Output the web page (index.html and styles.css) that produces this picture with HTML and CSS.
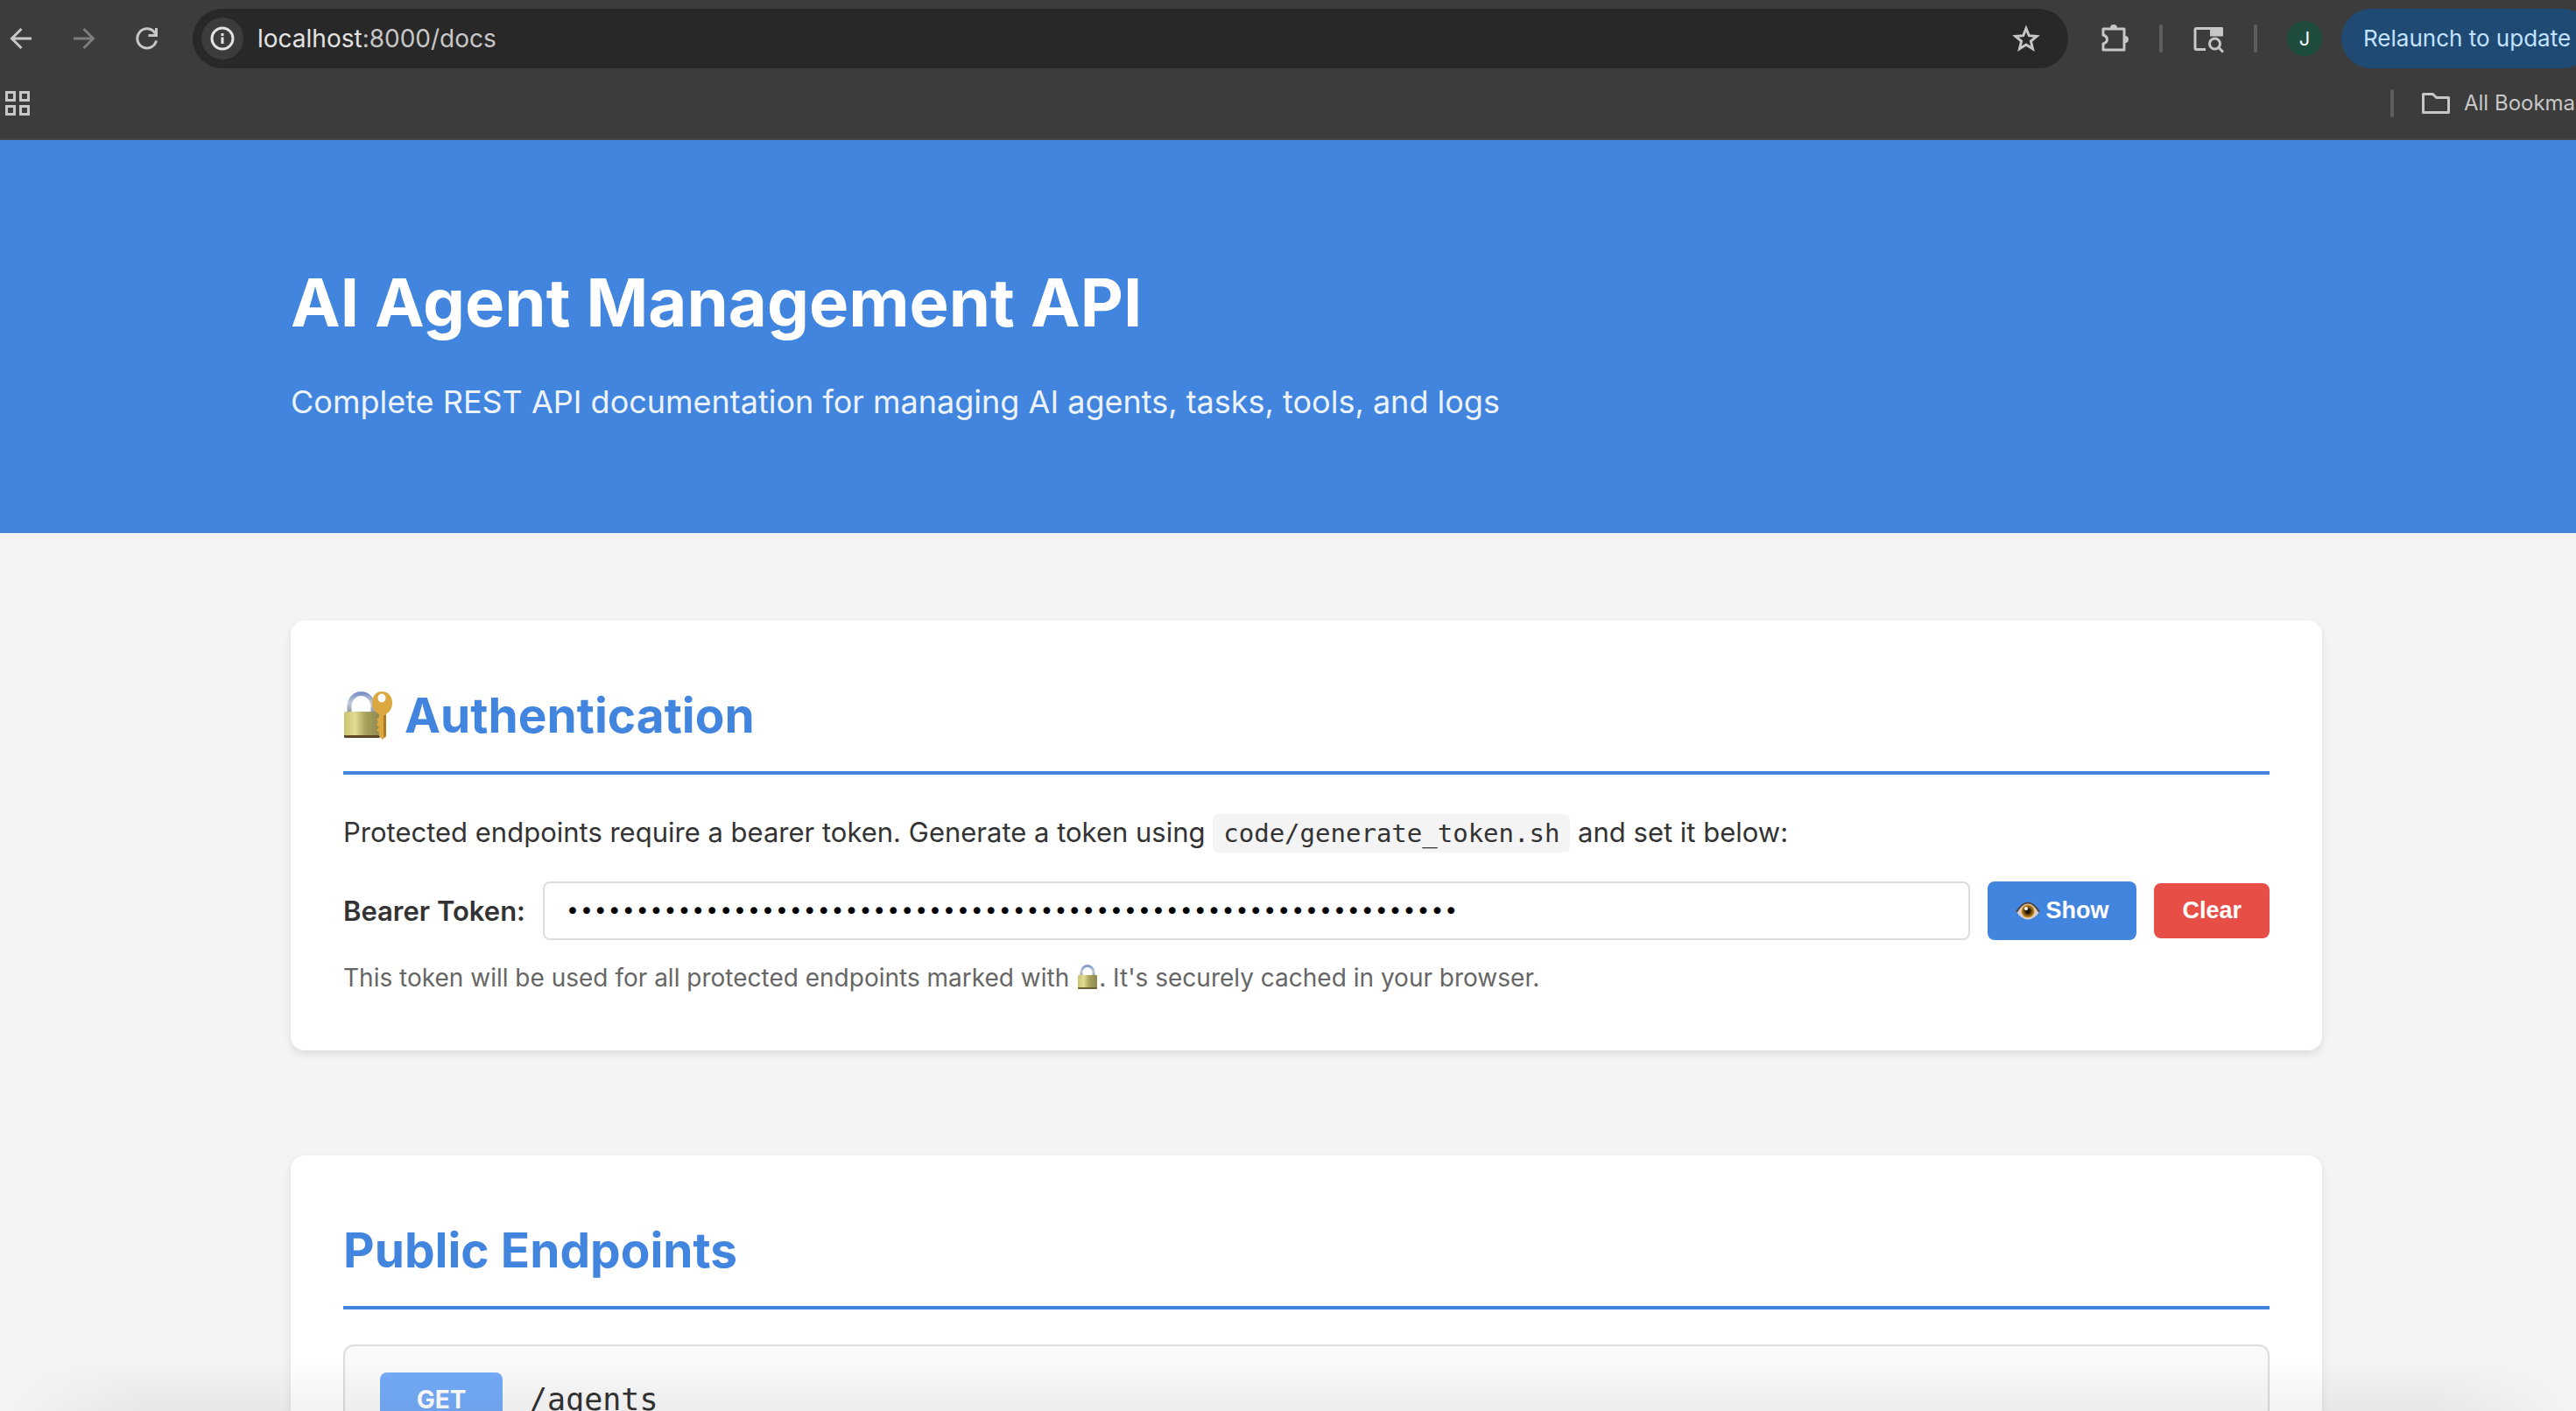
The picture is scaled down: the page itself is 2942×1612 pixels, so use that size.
FILE: index.html
```html
<!DOCTYPE html>
<html lang="en">
<head>
<meta charset="utf-8">
<title>AI Agent Management API</title>
<link rel="stylesheet" href="styles.css">
</head>
<body>
<div class="window">
  <nav class="chrome" aria-label="Browser">
    <div class="toolbar">
      <div class="nav-buttons">
        <button class="icon-button" aria-label="Back"><svg width="26" height="26" viewBox="0 0 26 26" fill="none" stroke="#c7c7c7" stroke-width="3"><path d="M25 13H3M13.500 2 2.500 13l11 11"/></svg></button>
        <button class="icon-button" aria-label="Forward"><svg width="26" height="26" viewBox="0 0 26 26" fill="none" stroke="#7d7d7d" stroke-width="3"><path d="M1 13h22M12.500 2l11 11-11 11"/></svg></button>
        <button class="icon-button" aria-label="Reload"><svg width="26" height="26" viewBox="0 0 26 26" fill="none" stroke="#c7c7c7" stroke-width="3"><path d="M23.500 15.500A11 11 0 1 1 21 5.500L24 9M23.500 1v8.500h-9"/></svg></button>
      </div>
      <div class="omnibox">
        <button class="site-info" aria-label="Site information"><svg width="28" height="28" viewBox="0 0 28 28" fill="none" stroke="#e3e3e3" stroke-width="3"><circle cx="14" cy="14" r="12"/><path d="M14 12.500v7.500M14 8v3"/></svg></button>
        <span class="url"><span class="url-host">localhost</span>:8000/docs</span>
        <button class="icon-button" aria-label="Bookmark this tab"><svg width="32" height="32" viewBox="0 0 32 32" fill="none" stroke="#c7c7c7" stroke-width="3"><path d="M16 4.500l3.300 8.200 8.800.7-6.700 5.700 2.100 8.600L16 23l-7.500 4.700 2.100-8.600-6.700-5.700 8.800-.7z"/></svg></button>
      </div>
      <div class="actions">
        <button class="icon-button" aria-label="Extensions"><svg width="36" height="36" viewBox="0 0 36 36"><path d="M6 7h24v24H6v-7c3-1 4.500-2.500 4.500-5S9 15 6 14z" fill="none" stroke="#c7c7c7" stroke-width="3" stroke-linejoin="round"/><path d="M14 6a4 4 0 0 1 8 0zM31 15a4 4 0 0 1 0 8z" fill="#c7c7c7"/></svg></button>
        <span class="divider"></span>
        <button class="icon-button" aria-label="Search side panel"><svg width="36" height="36" viewBox="0 0 36 36"><path d="M15 30.500H4.500q-1.500 0-1.500-1.500V8q0-1.500 1.500-1.500H33V14H20" fill="none" stroke="#c7c7c7" stroke-width="3"/><path d="M20 5h12q3 0 3 3v7H20z" fill="#c7c7c7"/><circle cx="25.500" cy="24" r="6" fill="none" stroke="#c7c7c7" stroke-width="3"/><path d="M29.500 28l5.500 5.500" stroke="#c7c7c7" stroke-width="3"/></svg></button>
        <span class="divider"></span>
        <button class="avatar" aria-label="Profile">J</button>
        <button class="relaunch">Relaunch to update</button>
      </div>
    </div>
    <div class="bookmarks">
      <button class="icon-button" aria-label="Apps"><svg width="28" height="28" viewBox="0 0 28 28" fill="none" stroke="#c7c7c7" stroke-width="3"><path d="M1.500 1.500h9v9h-9zM17.500 1.500h9v9h-9zM1.500 17.500h9v9h-9zM17.500 17.500h9v9h-9z"/></svg></button>
      <div class="all-bookmarks">
        <span class="divider"></span>
        <button class="folder"><svg width="32" height="24" viewBox="0 0 32 24" fill="none" stroke="#c7c7c7" stroke-width="3" stroke-linejoin="round"><path d="M1.500 1.500h11l4 4h14v17h-29z"/></svg>All Bookmarks</button>
      </div>
    </div>
  </nav>

  <header class="hero">
    <div class="container">
      <h1>AI Agent Management API</h1>
      <p>Complete REST API documentation for managing AI agents, tasks, tools, and logs</p>
    </div>
  </header>

  <svg class="defs" width="0" height="0" aria-hidden="true">
    <defs>
      <linearGradient id="brass"><stop offset="0" stop-color="#c9c36f"/><stop offset=".3" stop-color="#e0dc92"/><stop offset=".6" stop-color="#a8a25c"/><stop offset="1" stop-color="#8c8750"/></linearGradient>
      <linearGradient id="steel" x2="0" y2="1"><stop offset="0" stop-color="#7f97c8"/><stop offset=".5" stop-color="#c3cad6"/><stop offset="1" stop-color="#8d95a3"/></linearGradient>
      <radialGradient id="iris"><stop offset=".3" stop-color="#1d1208"/><stop offset=".6" stop-color="#7a4d10"/><stop offset="1" stop-color="#d09a1c"/></radialGradient>
    </defs>
  </svg>

  <main class="container content">
    <section class="card">
      <h2><svg width="58" height="56" viewBox="0 0 58 56" role="img" aria-label="Locked with key"><path d="M7 25V18a13.500 14.500 0 0 1 27 0v7" fill="none" stroke="url(#steel)" stroke-width="5"/><rect x="1" y="24" width="41" height="29" rx="2" fill="url(#brass)"/><path d="M1 51h41v2q0 1-1 1H2q-1 0-1-1z" fill="#5d4a25"/><path d="M44 1c8 0 12 6 12 13 0 6-3 10-7 13v25l-4 4-4-4v-4l-3-3 3-3-3-3 2-3-2-3 3-3v-3c-5-3-8-7-8-13C33 7 37 1 44 1z" fill="#dba83f"/><path d="M46 28h3v24l-3 2z" fill="#b07a22"/><ellipse cx="44" cy="8.500" rx="4.500" ry="5" fill="#fff"/></svg>Authentication</h2>
      <p class="intro">Protected endpoints require a bearer token. Generate a token using <code>code/generate_token.sh</code> and set it below:</p>
      <form class="token-form">
        <label for="token">Bearer Token:</label>
        <input id="token" type="password" value="0123456789abcdef0123456789abcdef0123456789abcdef0123456789abcdef">
        <button type="button" class="button show"><svg width="28" height="22" viewBox="0 0 28 22" aria-hidden="true"><path d="M1 12Q7 1.500 14 1.500T27 12Q21 20.500 14 20.500T1 12z" fill="#d9cfce"/><path d="M1 12Q7 1.500 14 1.500T27 12" fill="none" stroke="#54453f" stroke-width="2"/><circle cx="14" cy="11" r="7.500" fill="url(#iris)"/><circle cx="12" cy="8" r="2" fill="#fff"/></svg>Show</button>
        <button type="button" class="button clear">Clear</button>
      </form>
      <p class="note">This token will be used for all protected endpoints marked with <svg class="emoji-lock" width="22" height="28" viewBox="0 0 22 28" role="img" aria-label="Locked"><path d="M4 14V9a7 7.500 0 0 1 14 0v5" fill="none" stroke="url(#steel)" stroke-width="3"/><rect width="22" height="16" y="12" rx="1" fill="url(#brass)"/><path d="M0 26h22v1q0 1-1 1H1q-1 0-1-1z" fill="#6b6034"/></svg>. It's securely cached in your browser.</p>
    </section>

    <section class="card">
      <h2>Public Endpoints</h2>
      <article class="endpoint">
        <span class="method">GET</span>
        <span class="path">/agents</span>
      </article>
    </section>
  </main>
</div>
<div class="edge-shade"></div>
</body>
</html>
```
FILE: styles.css
```css
* { box-sizing: border-box; margin: 0; padding: 0; }

html { overflow: hidden; }

body {
  height: 100vh;
  overflow: hidden;
  background: #f4f4f4;
  color: #333;
  font: 31px/52px Inter, "Liberation Sans", sans-serif;
}

/* The browser window runs a little past the right edge of the screen. */
.window { width: calc(100% + 42px); }

button { border: 0; background: none; font: inherit; color: inherit; }

svg { display: block; flex: none; }

.defs { position: absolute; }

/* Browser chrome */
.chrome {
  height: 160px;
  padding-top: 10px;
  background: #3c3c3c;
  border-bottom: 2px solid #464646;
  color: #c7c7c7;
  font-size: 26px;
  line-height: 32px;
}

.toolbar { display: flex; height: 68px; align-items: center; }

.nav-buttons { display: flex; flex: none; width: 220px; padding-left: 11px; gap: 46px; }

.icon-button { display: flex; flex: none; align-items: center; justify-content: center; }

.omnibox {
  display: flex;
  flex: 1;
  align-items: center;
  height: 68px;
  padding: 0 32px 0 10px;
  border-radius: 34px;
  background: #282828;
}

.site-info {
  display: flex;
  align-items: center;
  justify-content: center;
  width: 48px;
  height: 48px;
  border-radius: 24px;
  background: #3c3c3c;
}

.url { flex: 1; margin-left: 16px; font-size: 28px; }
.url-host { color: #e3e3e3; }

.actions { display: flex; flex: none; align-items: center; width: 622px; padding-left: 34px; }

.divider { flex: none; width: 4px; height: 32px; border-radius: 2px; background: #5e5e5e; }

.actions .divider { margin: 0 34px; }

.avatar {
  flex: none;
  width: 40px;
  height: 40px;
  border-radius: 20px;
  background: #1e4d40;
  color: #fff;
  font-size: 22px;
}

.relaunch {
  flex: none;
  height: 68px;
  margin-left: 22px;
  padding: 0 25px;
  border-radius: 34px;
  background: #1f4a73;
  color: #c2e2ff;
  white-space: nowrap;
}

.bookmarks { display: flex; height: 80px; align-items: center; justify-content: space-between; padding-left: 6px; }

.all-bookmarks { display: flex; flex: none; width: 254px; gap: 32px; align-items: center; }

.folder { display: flex; gap: 16px; align-items: center; font-size: 24px; white-space: nowrap; }

/* Page */
.container { max-width: 2320px; margin: 0 auto; }

.hero { padding: 121px 0 119px; background: #4285de; color: #fff; }
.hero h1 { margin-bottom: 20px; font-size: 76px; line-height: 128px; }
.hero p { font-size: 36px; line-height: 61px; opacity: .9; }

.content { padding-top: 100px; }

.card {
  margin-bottom: 120px;
  padding: 60px;
  border-radius: 16px;
  background: #fff;
  box-shadow: 0 4px 8px rgba(0, 0, 0, .1);
}

.card h2 {
  display: flex;
  gap: 12px;
  align-items: center;
  margin-bottom: 40px;
  padding: 2px 0 18px;
  border-bottom: 4px solid #4285de;
  color: #4285de;
  font-size: 55px;
  line-height: 92px;
}

.intro { margin-bottom: 30px; }

code {
  padding: 5px 12px;
  border-radius: 6px;
  background: #f4f4f4;
  font: 29px/34px "DejaVu Sans Mono", "Liberation Mono", monospace;
}

.token-form { display: flex; gap: 20px; align-items: center; margin-bottom: 20px; }
.token-form label { font-weight: 600; }

.token-form input {
  flex: 1;
  min-width: 0;
  height: 67px;
  padding: 0 24px;
  border: 2px solid #ddd;
  border-radius: 8px;
  background: #fff;
  color: #000;
  font: 27px "DejaVu Sans", "Liberation Sans", sans-serif;
}

.button {
  display: flex;
  gap: 6px;
  align-items: center;
  padding: 16px 32px;
  border-radius: 8px;
  color: #fff;
  font: bold 27px/31px "Liberation Sans", Arial, sans-serif;
}

.show { padding: 18px 32px; background: #4285de; }
.clear { background: #e74e47; }

.note { color: #666; font-size: 28px; line-height: 46px; }

.emoji-lock { display: inline-block; margin: 0 2px; vertical-align: -3px; }

.endpoint {
  display: flex;
  gap: 30px;
  align-items: center;
  padding: 30px 40px;
  border: 2px solid #ddd;
  border-radius: 12px;
  background: #fafafa;
}

.method {
  width: 140px;
  padding: 8px 0;
  border-radius: 8px;
  background: #74abf8;
  color: #fff;
  font-size: 28px;
  font-weight: 700;
  line-height: 46px;
  text-align: center;
}

.path { font: 35px/56px "DejaVu Sans Mono", "Liberation Mono", monospace; }

/* Soft shade along the bottom of the screen */
.edge-shade {
  position: fixed;
  right: 0;
  bottom: 0;
  left: 0;
  height: 60px;
  background: linear-gradient(transparent, rgba(0, 0, 0, .05));
  mask-image: linear-gradient(to right, transparent, #000 160px, #000 calc(100% - 160px), transparent);
  pointer-events: none;
}
```
